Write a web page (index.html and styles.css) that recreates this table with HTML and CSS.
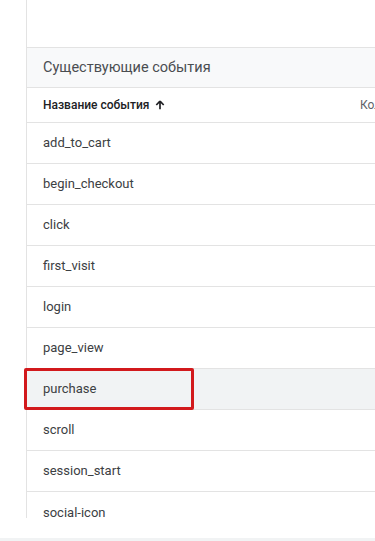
FILE: index.html
```html
<!DOCTYPE html>
<html lang="ru">
<head>
  <meta charset="UTF-8" />
  <title>События</title>
  <link rel="stylesheet" href="styles.css">
</head>
<body>
  <div class="page">
    <div class="panel">
      <div class="top-space"></div>

      <div class="card-title">Существующие события</div>

      <div class="events">
        <div class="row head">
          <div class="col-name">Название события <span class="sort">
            <svg width="10" height="10" viewBox="0 0 10 10"><path d="M5 1.2 L1.3 5 M5 1.2 L8.7 5 M5 1.5 V9.2" stroke="#202124" stroke-width="1.7" fill="none"/></svg>
          </span></div>
          <div class="col-count">Количество</div>
        </div>
        <div class="row"><div class="col-name">add_to_cart</div></div>
        <div class="row"><div class="col-name">begin_checkout</div></div>
        <div class="row"><div class="col-name">click</div></div>
        <div class="row"><div class="col-name">first_visit</div></div>
        <div class="row"><div class="col-name">login</div></div>
        <div class="row"><div class="col-name">page_view</div></div>
        <div class="row active"><div class="col-name">purchase</div><span class="mark"></span></div>
        <div class="row"><div class="col-name">scroll</div></div>
        <div class="row"><div class="col-name">session_start</div></div>
        <div class="row last"><div class="col-name">social-icon</div></div>
      </div>
    </div>
    <div class="bottom-strip"></div>
  </div>
</body>
</html>
```

FILE: styles.css
```css
body {
  margin: 0;
  background: #fff;
  font-family: Roboto, "Noto Sans", sans-serif;
  color: #3c4043;
}
.page {
  width: 375px;
  height: 541px;
  overflow: hidden;
  display: flex;
  flex-direction: column;
}
.panel {
  margin-left: 26px;
  width: 620px;
  height: 518px;
  border-left: 1px solid #e3e3e3;
  /* cut the list at the bottom, but let the highlight stick out on the left */
  clip-path: inset(0 0 0 -8px);
  flex-shrink: 0;
}
.top-space {
  height: 47px;
}
.card-title {
  height: 39px;
  display: flex;
  align-items: center;
  padding-left: 16px;
  background: #f8f9fa;
  border-top: 1px solid #e3e3e3;
  border-bottom: 1px solid #e3e3e3;
  font-size: 14.5px;
  color: #4a4d51;
}
.row {
  position: relative;
  height: 40px;
  display: flex;
  align-items: center;
  padding-left: 16px;
  padding-bottom: 1px;
  box-sizing: border-box;
  height: 41px;
  border-bottom: 1px solid #e3e3e3;
  font-size: 13px;
}
.row.head {
  height: 35px;
  font-size: 12px;
  font-weight: 500;
  color: #202124;
}
.row.last {
  border-bottom: none;
}
.row.active {
  background: #f1f3f4;
}
.col-name {
  width: 317px;
  display: flex;
  align-items: center;
}
.col-count {
  font-weight: 400;
  font-size: 12px;
  color: #5f6368;
}
.sort {
  display: inline-flex;
  margin-left: 6px;
}
.mark {
  position: absolute;
  left: -3px;
  top: -1px;
  width: 164px;
  height: 36px;
  border: 3px solid #d2191c;
  border-radius: 2px;
}
.bottom-strip {
  margin-top: 20px;
  height: 3px;
  background: #f1f3f4;
}
```
